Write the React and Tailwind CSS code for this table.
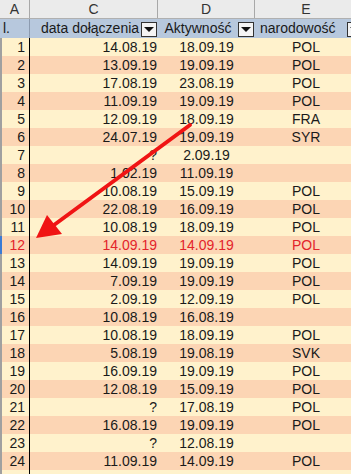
import React from "react";

const rows = [
  [1, "14.08.19", "18.09.19", "POL"],
  [2, "13.09.19", "19.09.19", "POL"],
  [3, "17.08.19", "23.08.19", "POL"],
  [4, "11.09.19", "19.09.19", "POL"],
  [5, "12.09.19", "18.09.19", "FRA"],
  [6, "24.07.19", "19.09.19", "SYR"],
  [7, "?", "2.09.19", ""],
  [8, "1.02.19", "11.09.19", ""],
  [9, "10.08.19", "15.09.19", "POL"],
  [10, "22.08.19", "16.09.19", "POL"],
  [11, "10.08.19", "18.09.19", "POL"],
  [12, "14.09.19", "14.09.19", "POL"],
  [13, "14.09.19", "19.09.19", "POL"],
  [14, "7.09.19", "19.09.19", "POL"],
  [15, "2.09.19", "12.09.19", "POL"],
  [16, "10.08.19", "16.08.19", ""],
  [17, "10.08.19", "18.09.19", "POL"],
  [18, "5.08.19", "19.08.19", "SVK"],
  [19, "16.09.19", "19.09.19", "POL"],
  [20, "12.08.19", "15.09.19", "POL"],
  [21, "?", "17.08.19", "POL"],
  [22, "16.08.19", "19.09.19", "POL"],
  [23, "?", "12.08.19", ""],
  [24, "11.09.19", "14.09.19", "POL"],
  [25, "", "", ""],
];

function FilterButton() {
  return (
    <div className="w-[16px] h-[15px] shrink-0 mt-auto mb-[1px] border border-[#333] bg-[#f4f4f4] flex items-center justify-center">
      <svg width="10" height="5" viewBox="0 0 10 5">
        <polygon points="0,0 10,0 5,5" fill="#111" />
      </svg>
    </div>
  );
}

export default function App() {
  return (
    <div className="relative w-[351px] h-[474px] overflow-hidden bg-[#fff2cc] font-['Liberation_Sans',Arial,sans-serif] text-[14px] text-[#1a1a1a]">
      {/* column letters */}
      <div className="flex h-[19px] bg-[#ebebeb] text-[#333] border-b border-[#b0b0b0] leading-[18px]">
        <div className="w-[30px] shrink-0 border-r border-[#a8a8a8] text-center">A</div>
        <div className="w-[128px] shrink-0 border-r border-[#a8a8a8] text-center">C</div>
        <div className="w-[97px] shrink-0 border-r border-[#a8a8a8] text-center">D</div>
        <div className="w-[102px] shrink-0 text-center">E</div>
      </div>

      {/* filter header */}
      <div className="flex h-[19px] bg-[#b7c8dd] leading-[18px]">
        <div className="w-[30px] shrink-0 border-r border-[#8c9bb0] pl-[3px]">l.</div>
        <div className="w-[128px] shrink-0 flex pr-[1px]">
          <span className="flex-1 pl-[11px] whitespace-nowrap">data dołączenia</span>
          <FilterButton />
        </div>
        <div className="w-[97px] shrink-0 flex pr-[1px]">
          <span className="flex-1 text-center whitespace-nowrap">Aktywność</span>
          <FilterButton />
        </div>
        <div className="w-[108px] shrink-0 flex">
          <span className="flex-1 pl-[5px] whitespace-nowrap">narodowość</span>
          <FilterButton />
        </div>
      </div>

      {/* data rows */}
      {rows.map(([n, c, d, e]) => {
        const red = n === 12;
        return (
          <div
            key={n}
            className={`flex h-[18px] leading-[18px] ${n % 2 === 0 ? "bg-[#fcd5b4]" : "bg-[#fff2cc]"} ${red ? "text-[#e3242b]" : ""}`}
          >
            <div className={`w-[2px] shrink-0 ${red ? "bg-[#3a7bd5]" : "bg-[#a0a0a0]"}`} />
            <div className="w-[28px] shrink-0 border-r border-black text-right pr-[4px]">{n === 25 ? "" : n}</div>
            <div className="w-[128px] shrink-0 text-right pr-[1px]">{c}</div>
            <div className="w-[97px] shrink-0 text-center">{d}</div>
            <div className="w-[102px] shrink-0 text-center">{e}</div>
          </div>
        );
      })}

      {/* annotation arrow */}
      <svg className="absolute inset-0 pointer-events-none" width="351" height="474" viewBox="0 0 351 474">
        <line x1="190" y1="125" x2="54" y2="225" stroke="#f01414" strokeWidth="4" strokeLinecap="round" />
        <polygon points="36,238 47,215 62,234" fill="#f01414" />
      </svg>
    </div>
  );
}
